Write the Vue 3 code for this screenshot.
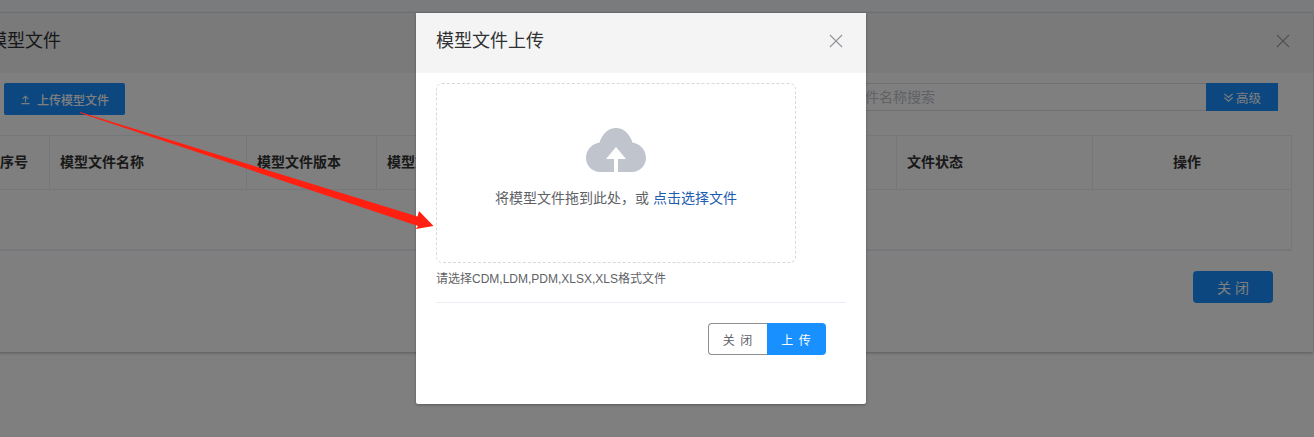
<script setup>
const columns = [
  { label: '序号', cls: 'center' },
  { label: '模型文件名称', cls: '' },
  { label: '模型文件版本', cls: '' },
  { label: '模型文件类型', cls: '' },
  { label: '文件状态', cls: '' },
  { label: '操作', cls: 'center action' }
]
</script>

<template>
  <div class="page">
    <div class="top-strip"></div>
    <section class="dialog">
      <header class="dialog-head">
        <h2>模型文件</h2>
        <svg class="x back-x" viewBox="0 0 14 14" aria-hidden="true"><path d="M1 1 13 13M13 1 1 13" /></svg>
      </header>
      <div class="toolbar">
        <button class="btn-upload">
          <svg viewBox="0 0 12 12" aria-hidden="true"><path d="M6 9V2.500M3 5.300 6 2.300 9 5.300M1.500 10.500h9" /></svg>
          <span>上传模型文件</span>
        </button>
        <div class="search">
          <div class="search-input">请输入模型文件名称搜索</div>
          <button class="btn-adv">
            <svg viewBox="0 0 12 12" aria-hidden="true"><path d="M1.500 2 6 6 10.500 2M1.500 6 6 10 10.500 6" /></svg>
            <span>高级</span>
          </button>
        </div>
      </div>
      <div class="table">
        <div class="thead">
          <div v-for="c in columns" :key="c.label" class="th" :class="c.cls">{{ c.label }}</div>
        </div>
        <div class="tbody"></div>
      </div>
      <div class="dialog-foot">
        <button class="btn-close">关 闭</button>
      </div>
    </section>

    <div class="overlay"></div>

    <section class="modal">
      <header class="modal-head">
        <h2>模型文件上传</h2>
        <svg class="x" viewBox="0 0 14 14" aria-hidden="true"><path d="M1 1 13 13M13 1 1 13" /></svg>
      </header>
      <div class="modal-body">
        <div class="drop">
          <svg class="cloud" viewBox="0 0 60 44" aria-hidden="true">
            <path class="cloud-shape" d="M14 44C6 44 0 37.500 0 30 0 22 6 15.500 13.500 14.500 16 6 22.500 0 30 0S44 6 46.500 14.500C54 15.500 60 22 60 30 60 37.500 54 44 46 44Z" />
            <path class="cloud-arrow" d="M30 19 40 31H32V44H28V31H20Z" />
          </svg>
          <p>将模型文件拖到此处，或 <em>点击选择文件</em></p>
        </div>
        <p class="tip">请选择CDM,LDM,PDM,XLSX,XLS格式文件</p>
        <div class="divider"></div>
        <div class="actions">
          <button class="ghost">关 闭</button>
          <button class="primary">上 传</button>
        </div>
      </div>
    </section>

    <svg class="arrow" viewBox="0 0 1314 437" aria-hidden="true">
      <polygon points="80,112 417.500,216.500 419,211 433.500,226 415.700,229 418,226 80,113" />
    </svg>
  </div>
</template>

<style>
html, body { margin: 0; }
</style>

<style scoped>
* { box-sizing: border-box; }
.page {
  position: relative;
  width: 1314px;
  height: 437px;
  overflow: hidden;
  background: #fff;
  font-family: "Liberation Sans", "Noto Sans CJK SC", sans-serif;
  color: #333;
}
h2, p { margin: 0; font-weight: 400; }
button { font-family: inherit; border: 0; padding: 0; }
.top-strip { height: 13px; background: #f4f6fa; border-bottom: 1px solid #e6e8ec; }
.dialog {
  width: 1344px;
  height: 339px;
  margin-left: -31px;
  background: #fff;
  box-shadow: 0 1px 3px rgba(0, 0, 0, .3);
}
.dialog-head {
  height: 60px;
  padding: 0 23px 4px 20px;
  display: flex;
  align-items: center;
  justify-content: space-between;
  background: #f4f4f4;
}
.dialog-head h2, .modal-head h2 { font-size: 18px; line-height: 24px; color: #303133; }
.x { width: 14px; height: 14px; fill: none; stroke: #909399; stroke-width: 1.100; }
.back-x { stroke: #a0a3a8; }
.toolbar {
  display: flex;
  justify-content: space-between;
  padding: 10px 35px 0 35px;
  height: 62px;
}
.btn-upload {
  width: 121px;
  height: 32px;
  background: #1890ff;
  border-radius: 2px;
  color: #fff;
  font-size: 12px;
  font-weight: 500;
  display: flex;
  align-items: center;
  justify-content: center;
  gap: 6px;
}
.btn-upload svg { width: 11px; height: 11px; fill: none; stroke: #fff; stroke-width: 1.100; }
.search { display: flex; height: 28px; }
.search-input {
  width: 437px;
  padding-left: 11px;
  border: 1px solid #dcdfe6;
  border-width: 1px 0 1px 1px;
  font-size: 14px;
  line-height: 26px;
  color: #c0c4cc;
}
.btn-adv {
  width: 72px;
  background: #1890ff;
  color: #fff;
  font-size: 12.500px;
  display: flex;
  align-items: center;
  justify-content: center;
  gap: 2px;
}
.btn-adv svg { width: 11px; height: 11px; fill: none; stroke: #fff; stroke-width: 1.200; }
.table {
  width: 1314px;
  margin-left: 9px;
  height: 116px;
  border: 1px solid #ebeef5;
  border-bottom-width: 2px;
}
.thead {
  display: grid;
  grid-template-columns: 71px 197px 130px 520px 196px 1fr;
  height: 54px;
  border-bottom: 1px solid #ebeef5;
}
.th {
  padding-left: 10px;
  border-right: 1px solid #ebeef5;
  font-size: 14px;
  font-weight: 700;
  line-height: 53px;
  color: #333;
}
.th:last-child { border-right: 0; }
.th.center { padding-left: 0; text-align: center; }
.th.action { padding-right: 10px; }
.dialog-foot {
  display: flex;
  justify-content: flex-end;
  padding: 20px 40px 0 0;
}
.btn-close {
  width: 80px;
  height: 32px;
  border-radius: 4px;
  background: #1890ff;
  color: #fff;
  font-size: 14px;
}
.overlay {
  position: absolute;
  inset: 0;
  background: rgba(0, 0, 0, .5);
}
.modal {
  position: absolute;
  left: 416px;
  top: 13px;
  width: 450px;
  height: 391px;
  background: #fff;
  border-radius: 0 0 2px 2px;
  box-shadow: 0 1px 3px rgba(0, 0, 0, .3);
}
.modal-head {
  height: 60px;
  padding: 0 23px 4px 20px;
  display: flex;
  align-items: center;
  justify-content: space-between;
  background: #f4f4f4;
}
.modal-body { padding: 10px 20px 0; }
.drop {
  width: 360px;
  height: 180px;
  border: 1px dashed #d9d9d9;
  border-radius: 6px;
  display: flex;
  flex-direction: column;
  align-items: center;
  padding-top: 44px;
}
.cloud { width: 60px; height: 44px; }
.cloud-shape { fill: #c0c4cc; }
.cloud-arrow { fill: #fff; }
.drop p {
  margin-top: 16px;
  font-size: 14px;
  line-height: 20px;
  color: #606266;
}
.drop em { font-style: normal; color: #1c5cb0; }
.tip {
  margin-top: 8px;
  font-size: 12px;
  line-height: 17px;
  color: #606266;
}
.divider { margin-top: 14px; height: 1px; background: #ebeef5; }
.actions { display: flex; justify-content: flex-end; padding: 20px 20px 0 0; }
.actions button {
  width: 59px;
  height: 32px;
  font-size: 12px;
  letter-spacing: 1px;
}
.ghost {
  background: #fff;
  color: #606266;
  border: 1px solid #8f8f8f;
  border-right: 0;
  border-radius: 4px 0 0 4px;
}
.primary {
  background: #1890ff;
  color: #fff;
  border-radius: 0 4px 4px 0;
}
.arrow {
  position: absolute;
  left: 0;
  top: 0;
  width: 1314px;
  height: 437px;
  pointer-events: none;
}
.arrow polygon { fill: #ff2011; }
</style>
